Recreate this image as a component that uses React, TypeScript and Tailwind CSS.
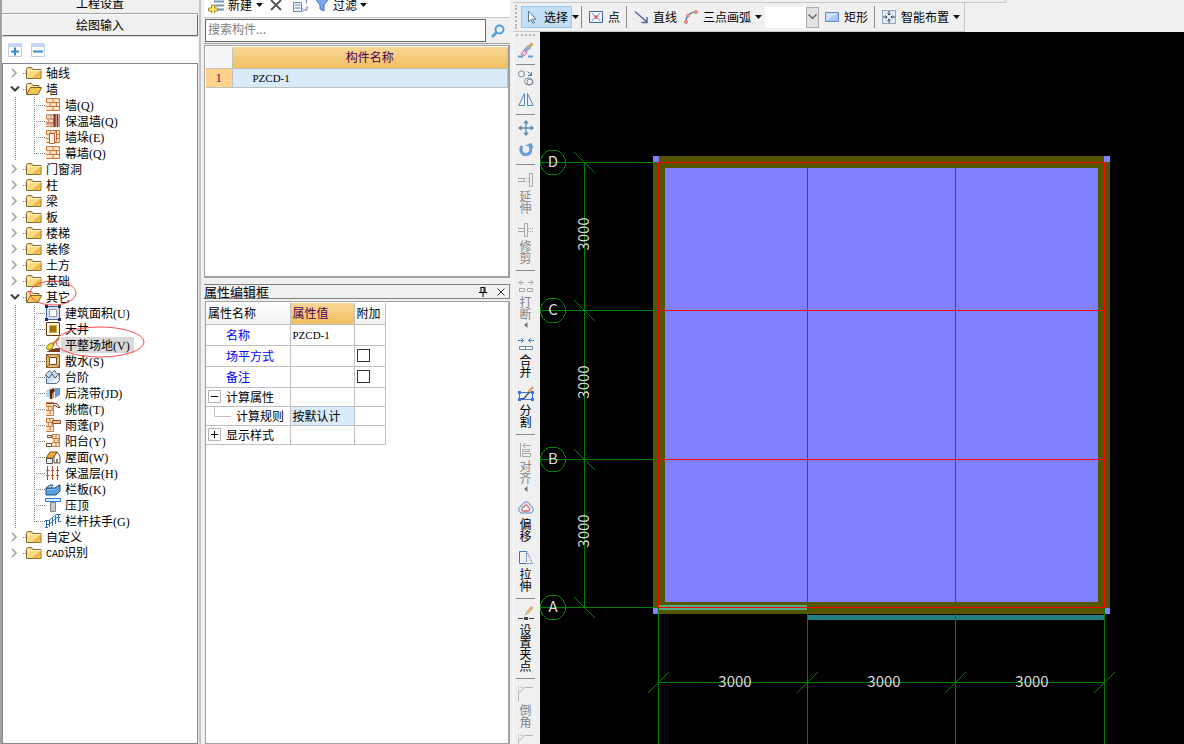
import React, { useState } from "react";
import clsx from "clsx";

type IconProps = { name: string };

const Brick = ({ x = 1, w = 14, y = 1, h = 13 }: { x?: number; w?: number; y?: number; h?: number }) => (
  <g>
    <rect x={x} y={y} width={w} height={h} fill="#fbe3c4" />
    <path
      d={`M${x} ${y + 0.5}h${w}M${x} ${y + 4.5}h${w}M${x} ${y + 8.5}h${w}M${x} ${y + h - 0.5}h${w}M${x + 0.5} ${y}v4M${x + w * 0.5} ${y}v4M${x + w * 0.3} ${y + 4}v4M${x + w * 0.75} ${y + 4}v4M${x + w * 0.5} ${y + 8}v4M${x + w - 0.5} ${y}v${h}`}
      stroke="#cf7f45"
      fill="none"
    />
  </g>
);

const TreeIcon = ({ name }: IconProps) => {
  const art: Record<string, React.ReactNode> = {
    brick: <Brick />,
    insulated: (
      <g>
        <Brick w={10} />
        <path d="M1 2h9M2 6h7M1 11h9" stroke="#c9a39a" strokeWidth="2" />
        <path d="M9.500 1v13M12.500 1v13" stroke="#93351c" strokeWidth="2" />
        <path d="M14.500 1v13" stroke="#d08a66" />
      </g>
    ),
    pier: (
      <g>
        <Brick />
        <path d="M4.500 4.500l2-3h5v10l-2 3h-5zM9.500 4v10M4.500 4.500h5l2-3" fill="#fdf3ea" stroke="#c4622f" />
      </g>
    ),
    area: (
      <g>
        <path d="M1.500 1.500h13v13h-13z" fill="#cfe0f6" stroke="#4a69a0" />
        <path d="M4.500 4.500h7v7h-7z" fill="#fff" stroke="#9a9a9a" />
        <path d="M0 0h3v3H0zM13 0h3v3h-3zM0 13h3v3H0zM13 13h3v3h-3z" fill="#27344f" />
      </g>
    ),
    patio: (
      <g>
        <path d="M1.500 1.500h13v13h-13z" fill="#fdf8e4" stroke="#5c3a12" />
        <path d="M4.500 4.500h7v7h-7z" fill="#a9710a" stroke="#d9aa3c" />
      </g>
    ),
    leveling: (
      <g>
        <path d="M1 15c4-1 5-4 8-3 2-2 4 0 6-1v4z" fill="#7a3a1b" />
        <path d="M14.500 1L7 7.500" stroke="#b98b2e" strokeWidth="2" />
        <path d="M6.500 6l2.500 2-2.500 4-4 .5-1-2 2-3z" fill="#f3d93c" stroke="#8d7714" />
      </g>
    ),
    apron: (
      <g>
        <path d="M1.500 1.500h13v13h-13z" fill="#e5b878" stroke="#8a5a22" />
        <path d="M4.500 4.500h7v7h-7z" fill="#fff" stroke="#6d4a20" />
        <path d="M1.500 1.500l3 3M14.500 1.500l-3 3M1.500 14.500l3-3M14.500 14.500l-3-3" stroke="#8a5a22" />
      </g>
    ),
    steps: (
      <g>
        <path d="M1.500 14.500v-5l-1-4 4-4 2 3 3-3 2 3h3v7l-3 3z" fill="#c9dcf1" stroke="#5e6f84" />
        <path d="M1 6l3 3 3-4 3 4 4-4" fill="none" stroke="#44566c" />
        <path d="M3 14h8l3-3V7l-5 4z" fill="#e9f1fa" />
      </g>
    ),
    strip: (
      <g>
        <path d="M1 5h5v7H1z" fill="#bcd5f1" />
        <path d="M10 3h5v7l-5 3z" fill="#6b98d8" />
        <path d="M4 4l5-1v10l-4 1z" fill="#e08f4b" />
        <path d="M5 5l4-2 1 3-3 3v5H5z" fill="#4a2d22" />
      </g>
    ),
    eaves: (
      <g>
        <Brick w={8} h={14} />
        <path d="M2 2.500h10l3 4h-2l-3-2H8" fill="#eee" stroke="#7b4327" />
      </g>
    ),
    canopy: (
      <g>
        <Brick w={8} h={14} />
        <path d="M7.500 3.500h8v3h-8z" fill="#e7bb93" stroke="#8f4f2a" />
      </g>
    ),
    balcony: (
      <g>
        <Brick x={7} w={8} />
        <path d="M1.500 10.500h5v3h-5zM2.500 2.500h4v2h-4z" fill="#fff" stroke="#7b4327" />
      </g>
    ),
    roof: (
      <g>
        <path d="M9 14V7l3-4 3 4v7z" fill="#fff" stroke="#555" />
        <path d="M1 9l4-6h7l-4 6z" fill="#f2a83a" stroke="#7c5718" />
        <path d="M1.500 9.500h6v5h-6z" fill="#eee" stroke="#555" />
        <path d="M11 10h2v4h-2z" fill="#9a7a55" />
      </g>
    ),
    insulation: (
      <path d="M2.500 1v14M7.500 1v14M12.500 1v14M1 5.500h3M6 5.500h3M11 5.500h3M1 10.500h3M6 10.500h3M11 10.500h3" stroke="#b0532b" fill="none" />
    ),
    parapet: (
      <g>
        <path d="M1 7h9l4-3h1v6l-4 4H1z" fill="#5a9fd8" stroke="#1d4f85" />
        <path d="M1 7l4-3h3l-2 3z" fill="#bfe0f7" stroke="#1d4f85" />
        <path d="M2 8.500h8" stroke="#8ec5ee" />
      </g>
    ),
    coping: (
      <g>
        <path d="M.5 1.500h15v3H.5z" fill="#d9ecff" stroke="#2e7ad0" />
        <path d="M5.500 5.500h5v9h-5z" fill="#c9c9c9" stroke="#858585" />
      </g>
    ),
    railing: (
      <path d="M0 7.500h4l7-6h5M1 11.500h3l8-7h3M1.500 7v8M4.500 7v7M7.500 5v8M10.500 3v8M13.500 1v8M0 14.500h3M13 8.500h3" stroke="#2c6fc6" fill="none" />
    ),
    folder: (
      <g>
        <path d="M.5 13.500V3.500l1-1h4l1.500 2h8v9z" fill="#fbdc83" stroke="#7c6531" />
        <path d="M15 5v8.500H5z" fill="#e3a52f" opacity=".6" />
        <path d="M1 5.500h14" stroke="#fff3c4" />
      </g>
    ),
    open: (
      <g>
        <path d="M.5 13V3.500l1-1h4l1.500 2h6v3" fill="#fbe7a4" stroke="#7c6531" />
        <path d="M.5 13.500l4-7h11.200l-3.700 7z" fill="#f5c650" stroke="#7c6531" />
      </g>
    ),
  };
  return (
    <svg className="h-4 w-4 shrink-0" viewBox="0 0 16 16" aria-hidden="true">
      {art[name]}
    </svg>
  );
};

const ToolIcon = ({ name }: IconProps) => {
  const art: Record<string, React.ReactNode> = {
    brush: (
      <g>
        <path d="M0 14.500h5M10 14.500h5" stroke="#6f9ac0" strokeWidth="2" />
        <path d="M14.500 1.500L11 5" stroke="#d5a437" strokeWidth="3" />
        <path d="M11.500 4.500L7 9" stroke="#93a9c9" strokeWidth="4" />
        <path d="M3 12l3-4 3 3-3 3z" fill="#f7c3dd" stroke="#b77ba5" />
      </g>
    ),
    copy: (
      <g fill="none" stroke="#7d8ba0">
        <circle cx="3.500" cy="4" r="3" />
        <path d="M9.500 1.500l4 4M13.500 2v3.500H10" stroke="#4a79b5" />
        <ellipse cx="10.500" cy="11.500" rx="4" ry="3.500" />
        <circle cx="12" cy="12" r="3" />
      </g>
    ),
    mirror: (
      <g fill="#eaf2fb" stroke="#5b86bb">
        <path d="M6.500 1.500v12H.8zM9.500 1.500v12h5.700z" />
      </g>
    ),
    move: (
      <path d="M8 1v14M1 8h14M6 3.500L8 1l2 2.500M6 12.500L8 15l2-2.500M3.500 6L1 8l2.500 2M12.500 6L15 8l-2.500 2" fill="none" stroke="#6589aa" strokeWidth="1.300" />
    ),
    rotate: (
      <g>
        <path d="M4 4C1.500 8 3.500 12.500 8 12.500s6-4.500 4-8" fill="none" stroke="#6b9be0" strokeWidth="3" />
        <path d="M8 2h6.500v6z" fill="#6b9be0" transform="rotate(-25 11 4)" />
      </g>
    ),
    extend: (
      <g fill="none" stroke="#a8a8a8">
        <path d="M11.500 1.500h3v13h-3zM0 6.500h6v3H0" />
        <path d="M6 6.500h5M6 9.500h5" strokeDasharray="1 1" />
      </g>
    ),
    trim: (
      <g fill="none" stroke="#a8a8a8">
        <path d="M6.500 1.500h3v13h-3zM0 6.500h6M0 9.500h6" />
        <path d="M10 6.500h6M10 9.500h6" strokeDasharray="1 1" />
      </g>
    ),
    break: (
      <g fill="none" stroke="#a8a8a8">
        <path d="M6 4.500H1M3.500 2L1 4.500 3.500 7M10 4.500h5M12.500 2L15 4.500 12.500 7M1.500 10.500h5v3h-5zM9.500 10.500h5v3h-5z" />
      </g>
    ),
    merge: (
      <g fill="none" stroke="#4a7fc4">
        <path d="M0 4.500h5.500M3 2l2.500 2.500L3 7M16 4.500h-5.500M13 2l-2.500 2.500L13 7" />
        <path d="M1.500 10.500h13v3h-13zM7.500 10v4" stroke="#7486a5" fill="#fff" />
      </g>
    ),
    split: (
      <g>
        <path d="M1.500 6.500h13v7h-13z" fill="#e2edfb" stroke="#3f6fe0" />
        <path d="M0 5h3v3H0zM13 5h3v3h-3zM0 12h3v3H0zM13 12h3v3h-3z" fill="#3f6fe0" />
        <path d="M3 12.500h3l6-7" fill="none" stroke="#444" strokeWidth="1.200" />
        <path d="M10.500 6L15 1" stroke="#d9a06a" strokeWidth="2.500" />
      </g>
    ),
    align: (
      <g fill="none" stroke="#a8a8a8">
        <path d="M2.500 1v14M4.500 7.500h7v2h-7zM4.500 11.500h8v3h-8zM13 3.500H5M7.500 1L5 3.500 7.500 6" />
      </g>
    ),
    offset: (
      <g>
        <path d="M5 4c1-3 6-3 7 1 4 2 4 7 1 8H3c-3-1-3-6 0-7z" fill="#d8e6f7" stroke="#6785b0" />
        <path d="M6 7c1-3 4-2 4 0 2 1 2 4 0 4H5c-2-1-1-4 1-4z" fill="#fff" stroke="#df6b62" strokeWidth="1.300" />
      </g>
    ),
    stretch: (
      <g fill="none" stroke="#4a6fae">
        <path d="M8 1.500H1.500v12H7" />
        <path d="M8.500 1l6 12.500H7M8.500 3v10" strokeDasharray="1.500 1" />
      </g>
    ),
    grip: (
      <g>
        <path d="M0 12.500h5M11 12.500h5" stroke="#444" />
        <path d="M6 11h4v3H6z" fill="#444" />
        <path d="M7 9l3-3" stroke="#6c7b62" />
        <path d="M9 7l5.500-6" stroke="#dcb36c" strokeWidth="3" />
      </g>
    ),
    chamfer: (
      <g fill="none" stroke="#b3b3b3">
        <path d="M.5 15V7l6-5.500H15" />
        <path d="M.5 6V1.500H6" strokeDasharray="1 1" />
      </g>
    ),
    cursor: <path d="M4.500 2v11l2.500-2.500 2 4 1.500-1-2-3.500H12z" fill="#fff" stroke="#5c7492" />,
    point: (
      <g>
        <path d="M1.500 2.500h13v11h-13z" fill="#f2f6fd" stroke="#4567a5" />
        <path d="M4 4.500l8 7M12 4.500l-8 7" stroke="#6a82b2" />
        <path d="M6.500 6.500h3v3h-3z" fill="#e5534d" />
      </g>
    ),
    line: <path d="M2 2.500L14 13M14 8v5.500H8.500" fill="none" stroke="#4b6790" strokeWidth="1.400" />,
    arc: (
      <g>
        <path d="M3 13C3 7 6 3.500 13 3" fill="none" stroke="#5f7fb2" strokeWidth="1.300" />
        <g fill="#f6c1ae" stroke="#d9694b">
          <circle cx="3" cy="13" r="1.400" />
          <circle cx="5" cy="6.500" r="1.400" />
          <circle cx="13" cy="3" r="1.400" />
        </g>
      </g>
    ),
    rect: (
      <g>
        <path d="M1.500 3.500h13v9h-13z" fill="#a9c5fb" stroke="#6b86c8" />
        <path d="M2 4h12L2 12z" fill="#cfdfff" />
      </g>
    ),
    smart: (
      <g>
        <path d="M1 1h14v14H1z" fill="#dfeaf6" />
        <path d="M1.500 1.500h13v13h-13z" fill="none" stroke="#4d6078" strokeDasharray="1 1" />
        <path d="M8 2v4M8 10v4M2 8h4M10 8h4M6.500 4.500L8 6l1.500-1.500M6.500 11.500L8 10l1.500 1.500M4.500 6.500L6 8 4.500 9.500M11.500 6.500L10 8l1.500 1.500" fill="none" stroke="#34404f" />
      </g>
    ),
    add: (
      <g>
        <path d="M6 4.500h10M7 8.500h9M7 12.500h9" stroke="#7693bb" strokeWidth="2" />
        <path d="M3.500 8h3v3h3v3h-3v2.500h-3V14h-3v-3h3z" fill="#ffe764" stroke="#a28c24" />
      </g>
    ),
    remove: <path d="M3 3l10 10M13 3L3 13" stroke="#595959" strokeWidth="2" />,
    duplicate: (
      <g fill="#edf3fb" stroke="#7289aa">
        <path d="M1.500 5.500h8v9h-8zM3 8h5M3 11h5M10.500 1.500h4v5M15 9v4h-4M11 11l-2 2 2 2" />
      </g>
    ),
    funnel: <path d="M1.500 2h13L10 8v6l-4-2V8z" fill="#7ba8ee" stroke="#4475c4" />,
    search: (
      <g fill="none" stroke="#4c9fdf">
        <circle cx="9.500" cy="6.500" r="4" strokeWidth="2" />
        <path d="M6.500 9.500L2 14" strokeWidth="2.500" />
      </g>
    ),
  };
  return (
    <svg className="h-4 w-4 shrink-0" viewBox="0 0 16 16" aria-hidden="true">
      {art[name]}
    </svg>
  );
};

const Caret = () => (
  <svg className="h-1 w-[7px] shrink-0" viewBox="0 0 7 4" aria-hidden="true">
    <path d="M0 0h7L3.500 4z" fill="#111" />
  </svg>
);

// text, shortcut and icon of each child entry
type Child = [string, string, string];
type Node = { label: string; latin?: string; children?: Child[] };

const tree: Node[] = [
  { label: "轴线" },
  {
    label: "墙",
    children: [
      ["墙", "(Q)", "brick"],
      ["保温墙", "(Q)", "insulated"],
      ["墙垛", "(E)", "pier"],
      ["幕墙", "(Q)", "brick"],
    ],
  },
  { label: "门窗洞" },
  { label: "柱" },
  { label: "梁" },
  { label: "板" },
  { label: "楼梯" },
  { label: "装修" },
  { label: "土方" },
  { label: "基础" },
  {
    label: "其它",
    children: [
      ["建筑面积", "(U)", "area"],
      ["天井", "", "patio"],
      ["平整场地", "(V)", "leveling"],
      ["散水", "(S)", "apron"],
      ["台阶", "", "steps"],
      ["后浇带", "(JD)", "strip"],
      ["挑檐", "(T)", "eaves"],
      ["雨蓬", "(P)", "canopy"],
      ["阳台", "(Y)", "balcony"],
      ["屋面", "(W)", "roof"],
      ["保温层", "(H)", "insulation"],
      ["栏板", "(K)", "parapet"],
      ["压顶", "", "coping"],
      ["栏杆扶手", "(G)", "railing"],
    ],
  },
  { label: "自定义" },
  { label: "识别", latin: "CAD" },
];

const Tree = () => {
  const [selected, setSelected] = useState("平整场地");
  return (
    <div className="relative flex-1 border border-[#828790] bg-white pt-px">
      {tree.map((node) => (
        <div key={node.label}>
          <button type="button" className="flex h-4 items-center whitespace-nowrap">
            <svg className="h-4 w-[23px]" viewBox="0 0 23 16" aria-hidden="true">
              {node.children ? (
                <path d="M8 5.500l4 4 4-4" fill="none" stroke="#404040" strokeWidth="2" />
              ) : (
                <path d="M9 4l4 4-4 4" fill="none" stroke="#a0a0a0" strokeWidth="1.500" />
              )}
              <path d="M20 8.500h3" stroke="#808080" strokeDasharray="1 1" />
            </svg>
            <TreeIcon name={node.children ? "open" : "folder"} />
            <span className="ml-1">
              {node.latin && <span className="font-['Liberation_Mono',monospace] text-[10px]">{node.latin}</span>}
              {node.label}
            </span>
          </button>
          {node.children?.map(([label, key, icon], i) => (
            <button
              type="button"
              key={label}
              onClick={() => setSelected(label)}
              className="flex h-4 items-center whitespace-nowrap"
            >
              <svg className="h-4 w-[42px]" viewBox="0 0 42 16" aria-hidden="true">
                <path
                  d={`M12.500 0v16M31.500 0v${i === node.children!.length - 1 ? 8 : 16}M31 8.500h11`}
                  fill="none"
                  stroke="#808080"
                  strokeDasharray="1 1"
                />
              </svg>
              <TreeIcon name={icon} />
              <span className={clsx("h-4 px-1", selected === label && "bg-[#d9d9d9]")}>
                {label}
                <span className="font-['Liberation_Serif',serif]">{key}</span>
              </span>
            </button>
          ))}
        </div>
      ))}
      {/* red pen marks over the tree */}
      <svg className="pointer-events-none absolute top-0 left-0 h-[320px] w-[160px]" aria-hidden="true">
        <ellipse cx="50" cy="229" rx="23" ry="12" fill="none" stroke="#ff4a4a" />
        <ellipse cx="97" cy="278" rx="44" ry="15" fill="none" stroke="#ff4a4a" />
      </svg>
    </div>
  );
};

const Sidebar = () => (
  <aside className="-mt-2 flex w-[198px] shrink-0 flex-col border-l-2 border-[#a0a0a0]">
    <button type="button" className="h-[22px] border-b border-[#a0a0a0] bg-[#f0f0f0]">
      工程设置
    </button>
    <button
      type="button"
      className="h-[22px] border border-t-white border-r-[#696969] border-b-[#696969] border-l-white bg-[#f0f0f0]"
    >
      绘图输入
    </button>
    <div className="flex h-[27px] items-center gap-[9px] border-t border-[#d4d4d4] bg-white pl-[6px]">
      <button type="button" aria-label="展开">
        <svg className="block h-[14px] w-[14px]" viewBox="0 0 14 14">
          <path d="M.5.5h13v13H.5z" fill="#fff" stroke="#bccdf0" />
          <path d="M0 0h14v4H0z" fill="#c8d5f5" />
          <path d="M3 8.500h8M7 4.500v8" stroke="#3a8bc4" strokeWidth="2" />
        </svg>
      </button>
      <button type="button" aria-label="折叠">
        <svg className="block h-[14px] w-[14px]" viewBox="0 0 14 14">
          <path d="M.5.5h13v13H.5z" fill="#fff" stroke="#bccdf0" />
          <path d="M0 0h14v4H0z" fill="#c8d5f5" />
          <path d="M2 8.500h10" stroke="#3a8bc4" strokeWidth="2" />
        </svg>
      </button>
    </div>
    <Tree />
  </aside>
);

const ComponentList = () => (
  <section className="-mt-2 flex h-[286px] flex-col">
    <div className="flex h-[26px] items-center border-b border-[#c8c8c8] bg-white pl-1">
      <button type="button" className="flex items-center gap-1">
        <ToolIcon name="add" />
        新建
        <Caret />
      </button>
      <button type="button" aria-label="删除" className="ml-[5px]">
        <ToolIcon name="remove" />
      </button>
      <button type="button" aria-label="复制" className="ml-2">
        <ToolIcon name="duplicate" />
      </button>
      <button type="button" className="ml-[6px] flex items-center gap-[3px]">
        <ToolIcon name="funnel" />
        过滤
        <Caret />
      </button>
    </div>
    <div className="mt-px flex h-[25px] border-b border-[#a0a0a0] pb-px pl-px">
      <input
        type="text"
        aria-label="搜索构件"
        placeholder="搜索构件..."
        className="min-w-0 flex-1 border border-[#696969] bg-white px-[2px] pb-1 placeholder:text-[#808080] focus:outline-none"
      />
      <button type="button" aria-label="搜索" className="flex w-6 items-center justify-center">
        <ToolIcon name="search" />
      </button>
    </div>
    <div className="mt-px flex-1 border border-r-2 border-b-2 border-[#a0a0a0] bg-white pt-px pl-px">
      <table className="w-full table-fixed border-collapse">
        <thead>
          <tr className="h-[21px]">
            <th className="w-[26px] border-r border-b border-[#c0c0c0] bg-[#f5f5f5]" />
            <th className="border-r border-b border-[#c0c0c0] bg-linear-to-b from-[#f8d795] to-[#f0bf5f] p-0 font-normal text-[#4b0055]">
              构件名称
            </th>
          </tr>
        </thead>
        <tbody>
          <tr className="h-[19px]">
            <td className="border-r border-b border-[#c0c0c0] bg-[#ffd48a] p-0 text-center font-['Liberation_Serif',serif] text-[#4b0055]">
              1
            </td>
            <td className="border-r border-b border-[#c0c0c0] bg-[#d9eaf8] py-0 pl-5 font-['Liberation_Serif',serif] text-[11px]">
              PZCD-1
            </td>
          </tr>
        </tbody>
      </table>
    </div>
  </section>
);

const cell = "border-r border-b border-[#c0c0c0] py-0 pr-0 text-left font-normal";

const Expander = ({ open }: { open?: boolean }) => (
  <svg className="mr-[5px] h-[13px] w-[13px]" viewBox="0 0 13 13" aria-hidden="true">
    <path d="M.5.5h12v12H.5z" fill="#fff" stroke="#b4b4b4" />
    <path d={open ? "M3 6.500h7" : "M3 6.500h7M6.500 3v7"} stroke="#000" />
  </svg>
);

const PropertyEditor = () => (
  <section className="mt-[6px] flex flex-1 flex-col">
    <header className="flex h-[15px] items-center border border-l-0 border-[#808080] bg-[#f0f0f0] pr-[3px]">
      <h2 className="flex-1 text-[13px]">属性编辑框</h2>
      <button type="button" aria-label="固定" className="mr-2">
        <svg className="block h-[10px] w-[10px]" viewBox="0 0 10 10">
          <path d="M3 0v5.500M3 .5h3M7 0v5.500M6 0v5M1 5.500h8M5 6v4" fill="none" stroke="#000" />
        </svg>
      </button>
      <button type="button" aria-label="关闭">
        <svg className="block h-[10px] w-[10px]" viewBox="0 0 10 10">
          <path d="M1.500 1.500l7 7M8.500 1.500l-7 7" stroke="#333" />
        </svg>
      </button>
    </header>
    <div className="mt-[2px] ml-px flex-1 border border-r-2 border-[#a0a0a0] bg-white pt-px">
      <table className="table-fixed border-collapse">
        <colgroup>
          <col className="w-[84px]" />
          <col className="w-[64px]" />
          <col className="w-[31px]" />
        </colgroup>
        <thead>
          <tr className="h-[21px]">
            <th className={clsx(cell, "bg-linear-to-b from-white to-[#f2f2f2] pl-[2px]")}>属性名称</th>
            <th className={clsx(cell, "bg-linear-to-b from-[#f8d795] to-[#f0bf5f] pl-[2px] text-[#4b0055]")}>属性值</th>
            <th className={clsx(cell, "bg-linear-to-b from-white to-[#f2f2f2] pl-[2px]")}>附加</th>
          </tr>
        </thead>
        <tbody>
          <tr className="h-[21px]">
            <th className={clsx(cell, "pl-5 text-[#0000ff]")}>名称</th>
            <td className={clsx(cell, "pl-[2px] font-['Liberation_Serif',serif] text-[11px]")}>PZCD-1</td>
            <td className={cell} />
          </tr>
          {["场平方式", "备注"].map((label) => (
            <tr className="h-[21px]" key={label}>
              <th className={clsx(cell, "pl-5 text-[#0000ff]")}>{label}</th>
              <td className={cell} />
              <td className={clsx(cell, "pl-[2px]")}>
                <input
                  type="checkbox"
                  aria-label={label}
                  className="block h-[13px] w-[13px] appearance-none border border-[#333] bg-white checked:bg-[#333]"
                />
              </td>
            </tr>
          ))}
          <tr className="h-[19px]">
            <th className={clsx(cell, "pl-[2px]")}>
              <button type="button" className="flex items-center">
                <Expander open />
                计算属性
              </button>
            </th>
            <td className={cell} />
            <td className={cell} />
          </tr>
          <tr className="h-[19px]">
            <th className={clsx(cell, "pl-2")}>
              <div className="flex items-center">
                <svg className="mr-1 h-[18px] w-[18px]" viewBox="0 0 18 18" aria-hidden="true">
                  <path d="M.5 0v9.500H17" fill="none" stroke="#c0c0c0" />
                </svg>
                计算规则
              </div>
            </th>
            <td className={clsx(cell, "bg-[#d9eaf8] pl-[2px]")}>按默认计</td>
            <td className={cell} />
          </tr>
          <tr className="h-[19px]">
            <th className={clsx(cell, "pl-[2px]")}>
              <button type="button" className="flex items-center">
                <Expander />
                显示样式
              </button>
            </th>
            <td className={cell} />
            <td className={cell} />
          </tr>
        </tbody>
      </table>
    </div>
  </section>
);

const Divider = () => <span className="h-[22px] w-px bg-[#8a8a8a]" />;

const DrawToolbar = () => (
  <div className="h-8 overflow-hidden">
    <div className="h-[3px] w-[493px] border-r border-b border-[#c8c8c8]" />
    <div className="flex h-[29px] w-max items-center border-r border-b border-[#c8c8c8] pr-1 pl-[2px]">
      <span className="h-6 border-l-2 border-dotted border-[#b4b4b4]" />
      <button
        type="button"
        className="ml-1 flex h-[22px] w-[51px] items-center gap-1 border border-[#90c8f6] bg-[#c2dff5] pl-[2px]"
      >
        <ToolIcon name="cursor" />
        选择
      </button>
      <button type="button" aria-label="选择方式" className="mr-[2px]">
        <Caret />
      </button>
      <Divider />
      <button type="button" className="mr-[6px] ml-[6px] flex items-center gap-1">
        <ToolIcon name="point" />
        点
      </button>
      <Divider />
      <button type="button" className="ml-[6px] flex items-center gap-1">
        <ToolIcon name="line" />
        直线
      </button>
      <button type="button" className="ml-[6px] flex items-center gap-1">
        <ToolIcon name="arc" />
        三点画弧
        <Caret />
      </button>
      <span className="relative ml-[3px] h-[21px] w-[54px]">
        <select
          aria-label="画弧参数"
          className="h-full w-full appearance-none border-0 bg-white pl-1 focus:outline-none"
        >
          <option value=""></option>
        </select>
        <span className="pointer-events-none absolute top-0 right-0 flex h-full w-[13px] items-center justify-center border border-[#adadad] bg-[#e1e1e1]">
          <svg className="h-[6px] w-[9px]" viewBox="0 0 9 6">
            <path d="M.5.5l4 4 4-4" fill="none" stroke="#555" strokeWidth="1.200" />
          </svg>
        </span>
      </span>
      <button type="button" className="mr-[6px] ml-[5px] flex items-center gap-1">
        <ToolIcon name="rect" />
        矩形
      </button>
      <Divider />
      <button type="button" className="ml-[6px] flex items-center gap-1">
        <ToolIcon name="smart" />
        智能布置
        <Caret />
      </button>
    </div>
  </div>
);

type Tool = { icon: string; label: string; text?: boolean; off?: boolean; menu?: boolean };

const toolGroups: Tool[][] = [
  [{ icon: "brush", label: "删除" }],
  [
    { icon: "copy", label: "复制" },
    { icon: "mirror", label: "镜像" },
  ],
  [
    { icon: "move", label: "移动" },
    { icon: "rotate", label: "旋转" },
  ],
  [
    { icon: "extend", label: "延伸", text: true, off: true },
    { icon: "trim", label: "修剪", text: true, off: true },
  ],
  [
    { icon: "break", label: "打断", text: true, off: true, menu: true },
    { icon: "merge", label: "合并", text: true },
    { icon: "split", label: "分割", text: true },
  ],
  [
    { icon: "align", label: "对齐", text: true, off: true, menu: true },
    { icon: "offset", label: "偏移", text: true },
    { icon: "stretch", label: "拉伸", text: true },
  ],
  [{ icon: "grip", label: "设置夹点", text: true }],
  [
    { icon: "chamfer", label: "倒角", text: true, off: true },
    { icon: "chamfer", label: "圆角", off: true },
  ],
];

const EditToolbar = () => (
  <div className="flex w-[27px] shrink-0 flex-col overflow-hidden border-l border-[#fafafa] pr-[5px] pl-[2px]">
    <span className="mt-[2px] mb-px border-t-2 border-dotted border-[#b4b4b4]" />
    {toolGroups.map((group, g) => (
      <div
        key={g}
        className="flex shrink-0 flex-col items-center gap-[6px] border-b border-[#8a8a8a] pt-[5px] pb-[6px] last:border-0"
      >
        {group.map((tool) => (
          <button
            type="button"
            key={tool.label}
            disabled={tool.off}
            aria-label={tool.label}
            className={clsx("flex shrink-0 flex-col items-center gap-[2px]", tool.text && "pt-[2px]", tool.off && "text-[#838383]")}
          >
            <ToolIcon name={tool.icon} />
            {tool.text && <span className="w-3 leading-[12px] break-all">{tool.label}</span>}
            {tool.menu && (
              <svg className="h-[6px] w-1" viewBox="0 0 4 6" aria-hidden="true">
                <path d="M3.500 0v6L0 3z" fill="#777" />
              </svg>
            )}
          </button>
        ))}
      </div>
    ))}
  </div>
);

const rows = [
  { name: "D", y: 130 },
  { name: "C", y: 278 },
  { name: "B", y: 427 },
  { name: "A", y: 575 },
];
const columns = [118, 267, 415, 564];

const Drawing = () => (
  <main className="min-w-0 flex-1 bg-black">
    <svg
      className="block h-full w-full font-['Noto_Sans_CJK_SC',sans-serif] text-[15px]"
      role="img"
      aria-label="平整场地"
      shapeRendering="crispEdges"
    >
      <rect x="113" y="124" width="457" height="458" fill="#555500" />
      <rect x="125" y="136" width="433" height="434" fill="#8080ff" />
      <path d="M113 124h6v6h-6zM564 124h6v6h-6zM113 576h5v6h-5zM565 576h5v6h-5z" fill="#8080ff" />
      <rect x="118" y="573" width="149" height="5" fill="#55aa80" />
      <rect x="267" y="583" width="297" height="5" fill="#208080" />
      <g stroke="#008000" fill="none">
        {rows.map((row) => (
          <g key={row.name}>
            <path d={`M0 ${row.y + 0.5}h118M34 ${row.y - 10}l21 21`} />
            <circle cx="13" cy={row.y + 0.5} r="12.500" />
          </g>
        ))}
        <path d="M44.500 130v445M118 650.500h446" />
        {columns.map((x) => (
          <path key={x} d={`M${x + 0.5} 575v200M${x - 10} 661l21 -21`} />
        ))}
      </g>
      <g stroke="#ff0000" fill="none">
        {rows.map((row) => (
          <path key={row.name} d={`M118 ${row.y + 0.5}h447`} />
        ))}
        {columns.map((x) => (
          <path key={x} d={`M${x + 0.5} 130v446`} />
        ))}
      </g>
      <g fill="#dcdcdc" textAnchor="middle">
        {rows.map((row) => (
          <text key={row.name} x="13" y={row.y + 5}>
            {row.name}
          </text>
        ))}
        {[202, 350, 499].map((y) => (
          <text key={y} transform={`translate(49 ${y}) rotate(-90)`}>
            3000
          </text>
        ))}
        {[195, 344, 492].map((x) => (
          <text key={x} x={x} y="655">
            3000
          </text>
        ))}
      </g>
    </svg>
  </main>
);

const App = () => {
  return (
    <div className="flex h-screen overflow-hidden bg-[#f0f0f0] font-['Noto_Sans_CJK_SC',sans-serif] text-xs leading-4 text-black">
      <Sidebar />
      <div className="ml-px flex w-[311px] shrink-0 flex-col border-l-2 border-[#c4c4c4] pl-[3px]">
        <ComponentList />
        <PropertyEditor />
      </div>
      <div className="ml-[3px] flex min-w-0 flex-1 flex-col">
        <DrawToolbar />
        <div className="flex min-h-0 flex-1">
          <EditToolbar />
          <Drawing />
        </div>
      </div>
    </div>
  );
};

export default App;
